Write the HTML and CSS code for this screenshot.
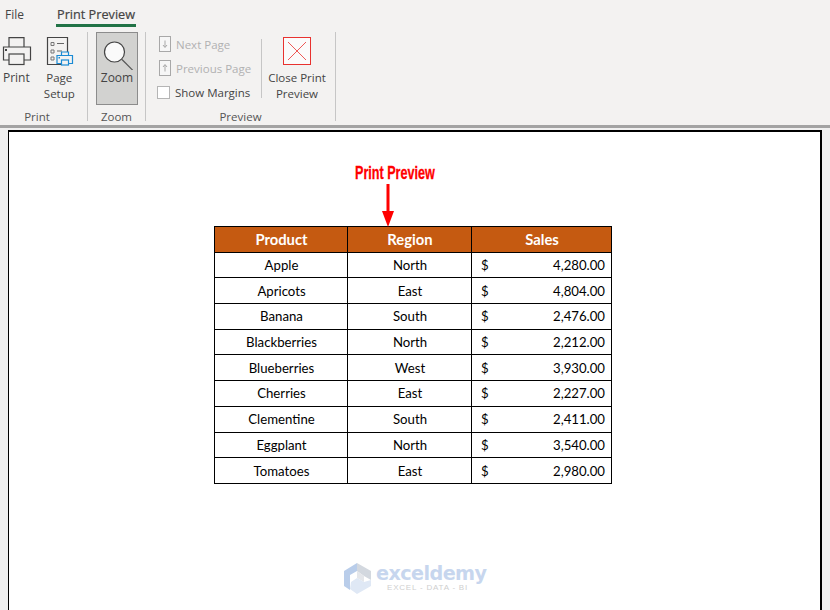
FILE: index.html
```html
<!DOCTYPE html>
<html lang="en">
<head>
<meta charset="utf-8">
<title>Print Preview</title>
<link rel="stylesheet" href="styles.css">
</head>
<body>
<header class="ribbon">
  <nav class="tabs">
    <span class="tab">File</span>
    <span class="tab tab-active">Print Preview</span>
  </nav>
  <div class="groups">
    <section class="group group-print">
      <div class="group-body">
        <div class="big-btn btn-print">
          <svg class="icon" width="32" height="32" viewBox="0 0 32 32" fill="none" stroke="#444" stroke-width="1.2">
            <path d="M9 11V1.600h15V11"/>
            <path d="M9 24H3.500V11h27v13H24"/>
            <rect x="9" y="18" width="15" height="10.500" fill="#f3f2f1"/>
            <rect x="5" y="13" width="2" height="2" fill="#444" stroke="none"/>
          </svg>
          <span class="btn-label">Print</span>
        </div>
        <div class="big-btn btn-setup">
          <svg class="icon" width="32" height="32" viewBox="0 0 32 32" fill="none">
            <path d="M2.500 1.500h20v27h-20z" stroke="#444" stroke-width="1.200"/>
            <path d="M6 6.500h3v3H6zM6 14h3v3H6zM6 21h3v3H6z" stroke="#777"/>
            <path d="M12 7.500h7M12 15h5" stroke="#666" stroke-width="1.200"/>
            <path d="M16.500 22v-6h7v6" fill="#f3f2f1" stroke="#1a8ad4" stroke-width="1.200"/>
            <path d="M16.500 27.500H12v-8h15.500v8H23" fill="#f3f2f1" stroke="#1a8ad4" stroke-width="1.200"/>
            <rect x="16.500" y="24" width="7" height="5" fill="#f3f2f1" stroke="#1a8ad4" stroke-width="1.200"/>
            <rect x="13.500" y="21" width="1.500" height="1.500" fill="#1a8ad4"/>
          </svg>
          <span class="btn-label">Page<br>Setup</span>
        </div>
      </div>
      <div class="group-name">Print</div>
    </section>
    <section class="group group-zoom">
      <div class="group-body">
        <div class="big-btn btn-zoom">
          <svg class="icon" width="32" height="32" viewBox="0 0 32 32" fill="none">
            <circle cx="13.500" cy="14" r="10" fill="#fafafa" stroke="#444" stroke-width="1.200"/>
            <path d="M21 21.500l11 11" stroke="#555" stroke-width="1.200"/>
          </svg>
          <span class="btn-label">Zoom</span>
        </div>
      </div>
      <div class="group-name">Zoom</div>
    </section>
    <section class="group group-preview">
      <div class="group-body">
        <div class="stack">
          <div class="small-btn disabled">
            <svg class="small-icon" width="12" height="16" viewBox="0 0 12 16" fill="none" stroke="#a8a8a8">
              <rect x="0.500" y="0.500" width="11" height="15" fill="#f6f6f6"/>
              <path d="M6 4.500v6.500M4 9l2 2.500L8 9"/>
            </svg>
            <span>Next Page</span>
          </div>
          <div class="small-btn disabled">
            <svg class="small-icon" width="12" height="16" viewBox="0 0 12 16" fill="none" stroke="#a8a8a8">
              <rect x="0.500" y="0.500" width="11" height="15" fill="#f6f6f6"/>
              <path d="M6 11.500V5M4 7l2-2.500L8 7"/>
            </svg>
            <span>Previous Page</span>
          </div>
          <div class="small-btn check-row">
            <span class="checkbox"></span>
            <span>Show Margins</span>
          </div>
        </div>
        <div class="group-divider"></div>
        <div class="big-btn btn-close">
          <svg class="icon" width="28" height="28" viewBox="0 0 28 28" fill="none">
            <rect x="0.500" y="0.500" width="27" height="27" fill="#fbfbfb" stroke="#e8322f"/>
            <path d="M5 5l18 18M23 5L5 23" stroke="#ee5a58"/>
          </svg>
          <span class="btn-label">Close Print<br>Preview</span>
        </div>
      </div>
      <div class="group-name">Preview</div>
    </section>
  </div>
</header>
<main class="viewer">
  <div class="page">
    <div class="callout">
      <div class="callout-text">Print Preview</div>
      <svg class="callout-arrow" width="12" height="44" viewBox="0 0 12 44">
        <path d="M4.500 0h3v27H12l-6 16-6-16h4.500z" fill="#f00"/>
      </svg>
    </div>
    <table class="sheet">
      <colgroup><col class="c1"><col class="c2"><col class="c3"></colgroup>
      <thead>
        <tr><th>Product</th><th>Region</th><th>Sales</th></tr>
      </thead>
      <tbody>
        <tr><td>Apple</td><td>North</td><td><div class="money"><span>$</span><span>4,280.00</span></div></td></tr>
        <tr><td>Apricots</td><td>East</td><td><div class="money"><span>$</span><span>4,804.00</span></div></td></tr>
        <tr><td>Banana</td><td>South</td><td><div class="money"><span>$</span><span>2,476.00</span></div></td></tr>
        <tr><td>Blackberries</td><td>North</td><td><div class="money"><span>$</span><span>2,212.00</span></div></td></tr>
        <tr><td>Blueberries</td><td>West</td><td><div class="money"><span>$</span><span>3,930.00</span></div></td></tr>
        <tr><td>Cherries</td><td>East</td><td><div class="money"><span>$</span><span>2,227.00</span></div></td></tr>
        <tr><td>Clementine</td><td>South</td><td><div class="money"><span>$</span><span>2,411.00</span></div></td></tr>
        <tr><td>Eggplant</td><td>North</td><td><div class="money"><span>$</span><span>3,540.00</span></div></td></tr>
        <tr><td>Tomatoes</td><td>East</td><td><div class="money"><span>$</span><span>2,980.00</span></div></td></tr>
      </tbody>
    </table>
    <div class="watermark">
      <svg width="30" height="32" viewBox="0 0 30 32">
        <path d="M14 1L1 9v15l6 4V13l7-4z" fill="#b9cdea"/>
        <path d="M14 1l14 8v9l-7-4-7-5z" fill="#d3d8df"/>
        <path d="M14 9l7 5v6l-7-4z" fill="#e4e6ea"/>
        <path d="M8 20l6-4 7 4 7-2v6l-14 8-7-5z" fill="#dfe8f5"/>
      </svg>
      <div class="wm-text">
        <div class="wm-name">exceldemy</div>
        <div class="wm-sub">EXCEL - DATA - BI</div>
      </div>
    </div>
  </div>
</main>
</body>
</html>
```
FILE: styles.css
```css
* { box-sizing: border-box; }
html, body { margin: 0; padding: 0; height: 100%; overflow: hidden; }
body {
  width: 830px;
  height: 610px;
  display: flex;
  flex-direction: column;
  background: #f0f0f0;
  font-family: "Open Sans", "Noto Sans", sans-serif;
  font-size: 12px;
  color: #444;
}
.ribbon {
  height: 128px;
  flex: none;
  background: #f3f2f1;
  border-bottom: 3px solid #a3a3a3;
}
.tabs {
  height: 27px;
  display: flex;
  gap: 32px;
  padding-left: 5px;
  padding-top: 6px;
}
.tab { height: 21px; line-height: 17px; color: #444; }
.tab-active {
  font-size: 12.700px;
  -webkit-text-stroke: 0.2px #444;
  border-bottom: 3px solid #217346;
  padding: 0 1px;
}
.groups { display: flex; height: 95px; padding-top: 5px; }
.group {
  display: flex;
  flex-direction: column;
  border-right: 1px solid #c6c6c6;
  height: 89px;
}
.group-print { width: 88px; }
.group-zoom { width: 58px; }
.group-preview { width: 190px; }
.group-body { display: flex; flex: 1; min-height: 0; }
.group-name {
  height: 17px;
  margin-bottom: -5px;
  line-height: 16px;
  text-align: center;
  color: #555;
  font-size: 11.500px;
}
.group-print .group-name { padding-right: 13px; }
.big-btn {
  display: flex;
  flex-direction: column;
  align-items: center;
  line-height: 16px;
  text-align: center;
  font-size: 11.500px;
}
.icon { flex: none; }
.btn-print { width: 33px; padding-top: 4px; }
.btn-print .btn-label { margin-top: 2px; font-size: 12px; }
.btn-setup { width: 52px; margin-left: 3px; padding-top: 4px; }
.btn-setup .btn-label { margin-top: 2px; margin-right: 4px; }
.btn-zoom {
  width: 42px;
  height: 73px;
  margin-left: 8px;
  padding-top: 5px;
  background: #d2d2d0;
  border: 1px solid #8c8c8c;
  font-size: 12px;
}
.stack {
  width: 115px;
  padding-left: 11px;
  display: flex;
  flex-direction: column;
  font-size: 11.500px;
}
.group-divider {
  width: 1px;
  height: 59px;
  margin-top: 7px;
  background: #c6c6c6;
  flex: none;
}
.small-btn {
  height: 24px;
  display: flex;
  align-items: center;
  gap: 5px;
  flex: none;
  padding-left: 2px;
  white-space: nowrap;
}
.check-row { padding-left: 0; gap: 5px; }
.disabled { color: #b1b1b1; }
.small-icon { flex: none; }
.checkbox {
  width: 13px;
  height: 13px;
  background: #fff;
  border: 1px solid #b5b5b5;
}
.btn-close { margin-left: 6px; padding-top: 5px; white-space: nowrap; width: 58px; }
.btn-close .btn-label { margin-top: 5px; }
.viewer { flex: 1; min-height: 0; padding: 2px 8px 0 8px; overflow: hidden; }
.page {
  position: relative;
  height: 100%;
  background: #fff;
  border: 1px solid #000;
  border-width: 2px 2px 0 1px;
  padding-top: 94px;
}
.callout {
  position: absolute;
  left: 338px;
  top: 33px;
  width: 100px;
}
.callout-text {
  font-family: "Liberation Sans", sans-serif;
  font-weight: 700;
  font-size: 18px;
  line-height: 17px;
  color: #f00;
  white-space: nowrap;
  -webkit-text-stroke: 0.3px #f00;
  transform: scaleX(0.7);
  transform-origin: left center;
  margin-left: 8px;
}
.callout-arrow { position: absolute; left: 35px; top: 19px; }
.sheet {
  border-collapse: collapse;
  table-layout: fixed;
  width: 397px;
  margin-left: 205px;
  font-family: Lato, "Open Sans", sans-serif;
  font-size: 13.200px;
  color: #000;
}
.c1 { width: 133px; }
.c2 { width: 124px; }
.c3 { width: 140px; }
.sheet th, .sheet td {
  border: 1px solid #000;
  height: 25.700px;
  padding: 0 0 0 1px;
  text-align: center;
  font-weight: 400;
}
.sheet th {
  background: #c55a11;
  color: #fff;
  font-weight: 700;
  font-size: 14.800px;
}
.money { display: flex; justify-content: space-between; padding: 0 6px 0 8px; }
.watermark {
  position: absolute;
  left: 334px;
  top: 430px;
  display: flex;
  gap: 3px;
}
.wm-name {
  font-family: "DejaVu Sans", sans-serif;
  font-size: 20px;
  font-weight: 700;
  line-height: 16px;
  color: #c7d6ee;
  letter-spacing: -0.6px;
  transform: scaleX(0.96);
  transform-origin: left center;
  margin-top: 3px;
  margin-bottom: 2px;
}
.wm-sub {
  font-family: "Liberation Sans", sans-serif;
  font-size: 8px;
  line-height: 9px;
  letter-spacing: 0.8px;
  color: #cfcfcf;
  margin-left: 11px;
  white-space: nowrap;
}
```
